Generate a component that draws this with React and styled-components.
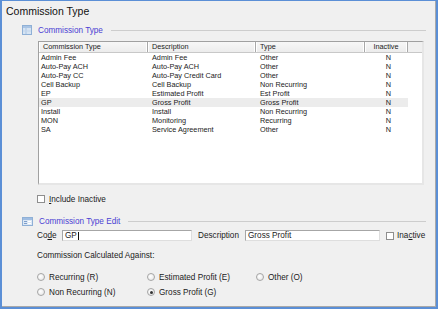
import React from 'react'
import styled, { createGlobalStyle } from 'styled-components'

const GlobalStyle = createGlobalStyle`
  html, body {
    margin: 0;
    padding: 0;
    background: #f0f0f0;
  }
  * { box-sizing: border-box; }
`

const rows = [
  { code: 'Admin Fee', desc: 'Admin Fee', type: 'Other', inactive: 'N' },
  { code: 'Auto-Pay ACH', desc: 'Auto-Pay ACH', type: 'Other', inactive: 'N' },
  { code: 'Auto-Pay CC', desc: 'Auto-Pay Credit Card', type: 'Other', inactive: 'N' },
  { code: 'Cell Backup', desc: 'Cell Backup', type: 'Non Recurring', inactive: 'N' },
  { code: 'EP', desc: 'Estimated Profit', type: 'Est Profit', inactive: 'N' },
  { code: 'GP', desc: 'Gross Profit', type: 'Gross Profit', inactive: 'N', selected: true },
  { code: 'Install', desc: 'Install', type: 'Non Recurring', inactive: 'N' },
  { code: 'MON', desc: 'Monitoring', type: 'Recurring', inactive: 'N' },
  { code: 'SA', desc: 'Service Agreement', type: 'Other', inactive: 'N' },
]

const radios = [
  { label: 'Recurring (R)' },
  { label: 'Estimated Profit (E)' },
  { label: 'Other (O)' },
  { label: 'Non Recurring (N)' },
  { label: 'Gross Profit (G)', checked: true },
]

function GridIcon() {
  return (
    <svg width="10" height="10" viewBox="0 0 10 10">
      <rect x="0.5" y="0.5" width="9" height="9" fill="#d6e4f3" stroke="#8fb0d6" />
      <rect x="1" y="1" width="8" height="2" fill="#a9c4e4" />
      <line x1="4" y1="3" x2="4" y2="9" stroke="#a9c4e4" />
      <line x1="1" y1="6" x2="9" y2="6" stroke="#c2d5ec" />
    </svg>
  )
}

function FormIcon() {
  return (
    <svg width="11" height="9" viewBox="0 0 11 9">
      <rect x="0.5" y="0.5" width="10" height="8" fill="#dde8f5" stroke="#8fb0d6" />
      <rect x="1" y="1" width="9" height="2" fill="#9fbde2" />
      <rect x="2" y="4" width="3" height="1" fill="#7e9fcc" />
      <rect x="6" y="4" width="3" height="1" fill="#ffffff" />
      <rect x="2" y="6" width="3" height="1" fill="#7e9fcc" />
      <rect x="6" y="6" width="3" height="1" fill="#ffffff" />
    </svg>
  )
}

export default function App() {
  return (
    <>
      <GlobalStyle />
      <Frame>
        <Title>Commission Type</Title>

        <SectionHeader>
          <GridIcon />
          <span>Commission Type</span>
          <Rule />
        </SectionHeader>

        <ListBox>
          <HeaderRow>
            <HeadCell>Commission Type</HeadCell>
            <HeadCell>Description</HeadCell>
            <HeadCell>Type</HeadCell>
            <HeadCell center>Inactive</HeadCell>
            <HeadFiller />
          </HeaderRow>
          {rows.map((r) => (
            <Row key={r.code} selected={r.selected}>
              <Cell first>{r.code}</Cell>
              <Cell>{r.desc}</Cell>
              <Cell>{r.type}</Cell>
              <Cell center>{r.inactive}</Cell>
            </Row>
          ))}
        </ListBox>

        <CheckRow>
          <Box />
          <span><u>I</u>nclude Inactive</span>
        </CheckRow>

        <SectionHeader edit>
          <FormIcon />
          <span>Commission Type Edit</span>
          <Rule />
        </SectionHeader>

        <EditRow>
          <Label width="25px">Co<u>d</u>e</Label>
          <Input width="130px">GP<Caret /></Input>
          <Label width="47px" gap="6px">Description</Label>
          <Input width="135px">Gross Profit</Input>
          <InlineCheck>
            <Box />
            <span>Ina<u>c</u>tive</span>
          </InlineCheck>
        </EditRow>

        <CalcLabel>Commission Calculated Against:</CalcLabel>

        <RadioGrid>
          {radios.map((r) => (
            <RadioItem key={r.label}>
              <Radio checked={r.checked} />
              <span>{r.label}</span>
            </RadioItem>
          ))}
        </RadioGrid>
      </Frame>
    </>
  )
}

const Frame = styled.div`
  width: 438px;
  height: 309px;
  background: #f0f0f0;
  border: 2px solid #5b8fd6;
  border-top-width: 1px;
  box-shadow: inset -1px -1px 0 #a9a9a9;
  font-family: "Liberation Sans", Arial, sans-serif;
  color: #1b1b1b;
  display: flex;
  flex-direction: column;
  overflow: hidden;
`

const Title = styled.div`
  height: 21px;
  padding: 4px 0 0 4px;
  font-size: 10.5px;
  line-height: 13px;
  color: #111;
`

const SectionHeader = styled.div`
  display: flex;
  align-items: center;
  gap: 6px;
  height: 10px;
  margin: ${(p) => (p.edit ? '12px' : '3px')} 10px 0 20px;
  font-size: 8.2px;
  color: #4b3fd3;
  white-space: nowrap;
`

const Rule = styled.div`
  flex: 1;
  height: 1px;
  background: #cdcdcd;
  margin-left: 2px;
`

const ListBox = styled.div`
  margin: 6px 0 0 36px;
  width: 386px;
  height: 144px;
  background: #fff;
  border-top: 1px solid #a0a0a0;
  border-left: 1px solid #a0a0a0;
  border-right: 2px solid #e6e6e6;
  border-bottom: 2px solid #e6e6e6;
  font-size: 7.3px;
  overflow: hidden;
`

const HeaderRow = styled.div`
  display: grid;
  grid-template-columns: 109px 108px 109px 43px 1fr;
  height: 11px;
  background: linear-gradient(#f7f7f7, #ececec);
  border-bottom: 1px solid #c8c8c8;
`

const HeadCell = styled.div`
  padding-left: ${(p) => (p.center ? '0' : '4px')};
  text-align: ${(p) => (p.center ? 'center' : 'left')};
  line-height: 10px;
  border-right: 1px solid #a8a8a8;
  box-shadow: inset -1px 0 0 #ffffff, inset 1px 0 0 #ffffff;
  white-space: nowrap;
`

const HeadFiller = styled.div`
  background: #f0f0f0;
`

const Row = styled.div`
  display: grid;
  grid-template-columns: 109px 108px 109px 43px;
  width: 369px;
  height: 9px;
  background: ${(p) => (p.selected ? '#ececec' : 'transparent')};
`

const Cell = styled.div`
  padding-left: ${(p) => (p.first ? '2px' : '4px')};
  text-align: ${(p) => (p.center ? 'center' : 'left')};
  line-height: 9px;
  white-space: nowrap;
`

const CheckRow = styled.div`
  display: flex;
  align-items: center;
  gap: 4px;
  height: 10px;
  margin: 9px 0 0 35px;
  font-size: 8.2px;
`

const Box = styled.span`
  display: inline-block;
  width: 8px;
  height: 8px;
  background: #fff;
  border: 1px solid #8e8e8e;
  flex-shrink: 0;
`

const EditRow = styled.div`
  display: flex;
  align-items: center;
  height: 11px;
  margin: 4px 0 0 35px;
  font-size: 8.2px;
`

const Label = styled.div`
  width: ${(p) => p.width};
  margin-left: ${(p) => p.gap || '0'};
  white-space: nowrap;
`

const Input = styled.div`
  width: ${(p) => p.width};
  height: 11px;
  background: #fff;
  border-top: 1px solid #a6a6a6;
  border-left: 1px solid #a6a6a6;
  border-right: 1px solid #dedede;
  border-bottom: 1px solid #dedede;
  padding-left: 2px;
  line-height: 9px;
  display: flex;
  align-items: center;
  white-space: nowrap;
`

const Caret = styled.span`
  display: inline-block;
  width: 1px;
  height: 8px;
  background: #111;
  margin-left: 1px;
`

const InlineCheck = styled.div`
  display: flex;
  align-items: center;
  gap: 3px;
  margin-left: 6px;
`

const CalcLabel = styled.div`
  height: 10px;
  margin: 10px 0 0 35px;
  font-size: 8.2px;
  line-height: 10px;
`

const RadioGrid = styled.div`
  display: grid;
  grid-template-columns: 110px 109px auto;
  row-gap: 5px;
  margin: 11px 0 0 35px;
  font-size: 8.2px;
`

const RadioItem = styled.div`
  display: flex;
  align-items: center;
  gap: 4px;
  height: 10px;
  white-space: nowrap;
`

const Radio = styled.span`
  position: relative;
  display: inline-block;
  width: 8px;
  height: 8px;
  border-radius: 50%;
  border: 1px solid #a5a5a5;
  background: radial-gradient(circle at 40% 40%, #ffffff, #e2e2e2);
  flex-shrink: 0;

  &::after {
    content: '';
    display: ${(p) => (p.checked ? 'block' : 'none')};
    position: absolute;
    left: 1.5px;
    top: 1.5px;
    width: 3px;
    height: 3px;
    border-radius: 50%;
    background: #333;
  }
`
